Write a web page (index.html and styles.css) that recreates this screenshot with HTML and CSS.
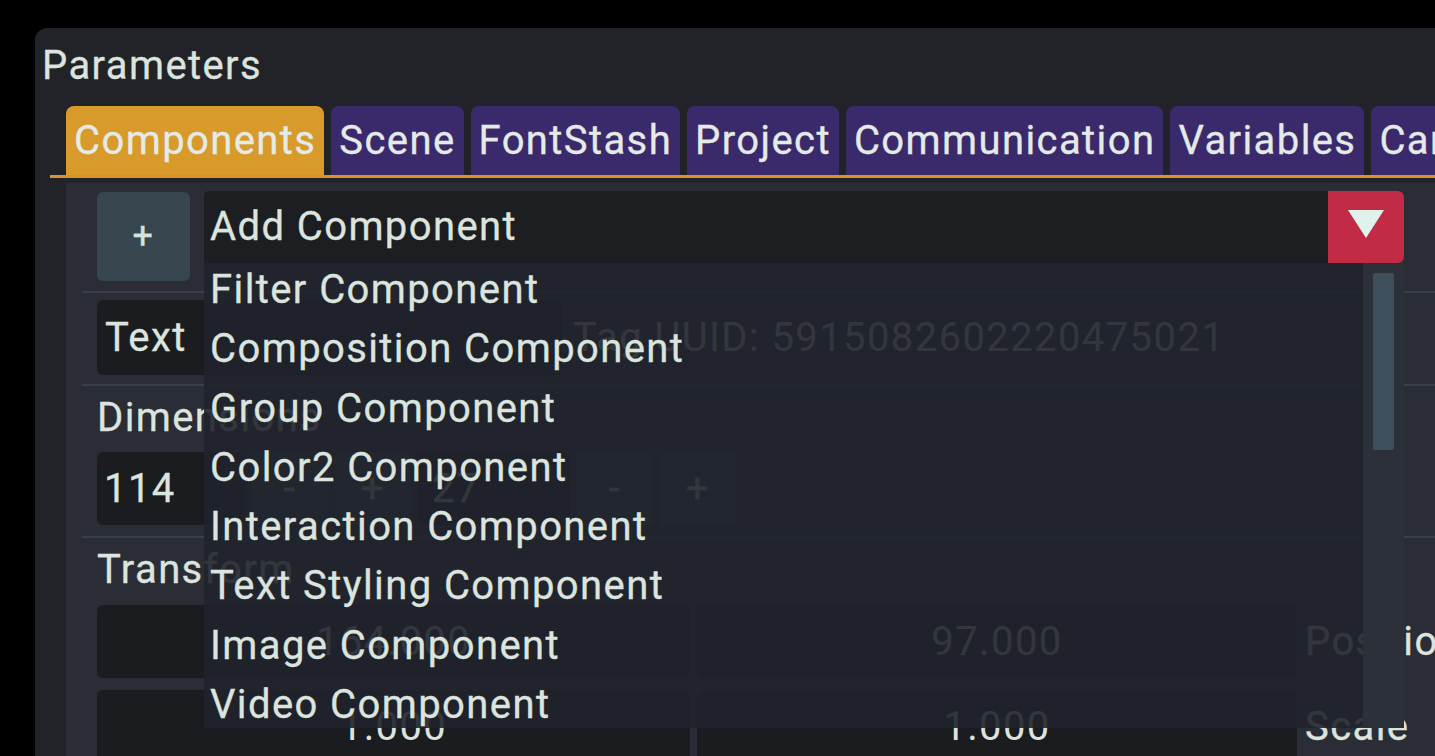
FILE: index.html
```html
<!DOCTYPE html>
<html>
<head>
<meta charset="utf-8">
<title>Parameters</title>
<link rel="stylesheet" href="styles.css">
</head>
<body>
<div class="window">
  <div class="title">Parameters</div>
  <div class="tabbar">
    <div class="tab active">Components</div>
    <div class="tab">Scene</div>
    <div class="tab">FontStash</div>
    <div class="tab">Project</div>
    <div class="tab">Communication</div>
    <div class="tab">Variables</div>
    <div class="tab">Camera</div>
  </div>
  <div class="content">
    <div class="row row-add">
      <div class="btn btn-add">+</div>
      <div class="combo-wrap">
        <div class="combo">
          <div class="combo-label">Add Component</div>
          <div class="combo-arrow">
            <svg width="36" height="28" viewBox="0 0 36 28"><polygon points="0,0 36,0 18,28" fill="#dff2ec"/></svg>
          </div>
        </div>
        <div class="popup">
          <div class="popup-list">
            <div class="item">Filter Component</div>
            <div class="item">Composition Component</div>
            <div class="item">Group Component</div>
            <div class="item">Color2 Component</div>
            <div class="item">Interaction Component</div>
            <div class="item">Text Styling Component</div>
            <div class="item">Image Component</div>
            <div class="item">Video Component</div>
          </div>
          <div class="scrollbar"><div class="grab"></div></div>
        </div>
      </div>
    </div>
    <div class="sep"></div>
    <div class="row row-text">
      <div class="input input-text">Text</div>
      <div class="hint">Tag UUID: 5915082602220475021</div>
    </div>
    <div class="sep"></div>
    <div class="label">Dimensions</div>
    <div class="row row-dim">
      <div class="input input-w">114</div>
      <div class="btn btn-small">-</div>
      <div class="btn btn-small">+</div>
      <div class="input input-h">27</div>
      <div class="btn btn-small">-</div>
      <div class="btn btn-small">+</div>
    </div>
    <div class="sep"></div>
    <div class="label">Transform</div>
    <div class="row row-vec">
      <div class="input drag drag-a">164.000</div>
      <div class="input drag drag-b">97.000</div>
      <div class="vec-label">Position</div>
    </div>
    <div class="row row-vec">
      <div class="input drag drag-a">1.000</div>
      <div class="input drag drag-b">1.000</div>
      <div class="vec-label">Scale</div>
    </div>
  </div>
</div>
</body>
</html>
```

FILE: styles.css
```css
html, body {
  margin: 0;
  padding: 0;
}
body {
  width: 1435px;
  height: 756px;
  overflow: hidden;
  background: #000000;
  font-family: Roboto, "Liberation Sans", sans-serif;
  font-size: 40px;
  letter-spacing: 1.4px;
  color: #dbe4de;
  -webkit-text-stroke: 0.3px #dbe4de;
}
.window {
  margin: 28px 0 0 35px;
  height: 728px;
  background: #212328;
  border-top-left-radius: 12px;
  overflow: hidden;
}
.title {
  height: 78px;
  box-sizing: border-box;
  padding: 14px 0 0 7px;
  line-height: 48px;
  white-space: nowrap;
}
.tabbar {
  display: flex;
  gap: 7px;
  margin-left: 15px;
  padding-left: 16px;
  height: 69px;
  border-bottom: 3px solid #d4962a;
  overflow: hidden;
}
.tab {
  flex-shrink: 0;
  height: 69px;
  line-height: 69px;
  padding: 0 8px;
  background: #3a2a6c;
  border-radius: 8px 8px 0 0;
  color: #e4ebe7;
  -webkit-text-stroke: 0.3px #e4ebe7;
  white-space: nowrap;
}
.tab.active {
  background: #d79a2b;
}
.content {
  margin: 5px 0 0 31px;
  height: 600px;
  padding-left: 16px;
  padding-top: 8px;
  box-sizing: border-box;
  background: #2a2d35;
}
.row {
  display: flex;
  margin-left: 15px;
  white-space: nowrap;
}
.row-add {
  align-items: flex-start;
  gap: 14px;
  height: 89px;
}
.btn {
  flex-shrink: 0;
  background: #37464f;
  border-radius: 6px;
  text-align: center;
  color: #d7e0db;
}
.btn-add {
  width: 93px;
  height: 89px;
  line-height: 89px;
  margin-top: 1px;
  font-size: 36px;
}
.combo-wrap {
  position: relative;
  width: 1200px;
  flex-shrink: 0;
}
.combo {
  display: flex;
  height: 72px;
  background: #1d1e21;
  border-radius: 5px 6px 6px 0;
}
.combo-label {
  flex: 1;
  padding-left: 6px;
  line-height: 72px;
}
.combo-arrow {
  width: 76px;
  height: 72px;
  box-sizing: border-box;
  padding-top: 19px;
  background: #c12b45;
  border-radius: 0 6px 6px 0;
  display: flex;
  justify-content: center;
  align-items: flex-start;
}
.popup {
  position: absolute;
  top: 72px;
  left: 0;
  width: 1200px;
  height: 465px;
  z-index: 2;
  display: flex;
  background: rgba(32, 35, 43, 0.9);
  overflow: hidden;
}
.popup-list {
  flex: 1;
  display: flex;
  flex-direction: column;
  gap: 5.3px;
  padding-left: 6px;
}
.item {
  line-height: 54px;
  height: 54px;
  flex-shrink: 0;
  white-space: nowrap;
}
.scrollbar {
  width: 41px;
  flex-shrink: 0;
  background: #2c3039;
}
.grab {
  margin: 10px 0 0 10px;
  width: 21px;
  height: 177px;
  background: #3e4f5b;
  border-radius: 2px;
}
.sep {
  height: 2px;
  background: #3a3e46;
  margin-top: 11px;
}
.row-text {
  margin-top: 7px;
  height: 75px;
}
.input {
  flex-shrink: 0;
  background: #1b1c1f;
  border-radius: 6px;
  box-sizing: border-box;
}
.input-text {
  width: 465px;
  height: 75px;
  line-height: 75px;
  padding-left: 8px;
}
.hint {
  margin-left: 11px;
  line-height: 75px;
  -webkit-text-stroke: 0;
}
.row-text + .sep {
  margin-top: 9px;
}
.label {
  margin: 10px 0 0 15px;
  line-height: 48px;
  height: 48px;
  white-space: nowrap;
}
.row-dim {
  margin-top: 10px;
  height: 73px;
  gap: 7px;
}
.row-dim .input,
.row-dim .btn {
  height: 73px;
  line-height: 73px;
}
.input-w {
  width: 148px;
  padding-left: 7px;
}
.input-h {
  width: 152px;
  padding-left: 14px;
}
.btn-small {
  width: 76px;
}
.label + .row-vec {
  margin-top: 11px;
}
.row-dim + .sep {
  margin-top: 11px;
}
.sep + .label {
  margin-top: 8px;
}
.content > .sep:nth-of-type(2) + .label {
  margin-top: 10px;
}
.row-vec {
  gap: 7px;
  height: 73px;
  margin-top: 12px;
}
.drag {
  height: 73px;
  line-height: 73px;
  text-align: center;
  -webkit-text-stroke: 0;
}
.drag-a {
  width: 593px;
}
.drag-b {
  width: 600px;
}
.vec-label {
  margin-left: 1px;
  line-height: 73px;
}
```
